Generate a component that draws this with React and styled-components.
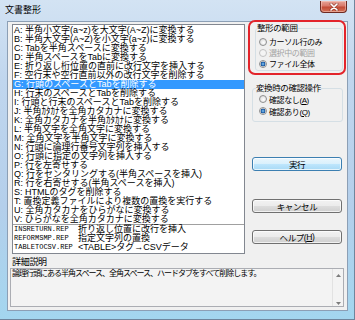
import React from 'react';
import styled, { createGlobalStyle } from 'styled-components';

const GlobalStyle = createGlobalStyle`
  html, body { margin: 0; padding: 0; }
  body {
    width: 355px;
    height: 320px;
    overflow: hidden;
    font-family: "Liberation Sans", "Noto Sans CJK JP", sans-serif;
    color: #000;
  }
`;

const Window = styled.div`
  width: 355px;
  height: 320px;
  box-sizing: border-box;
  display: flex;
  flex-direction: column;
  background: linear-gradient(180deg, #d3e3f3 0%, #c0d6ee 25%, #b4cfeb 65%, #a3d6ef 100%);
  border-right: 1px solid #6f859c;
  border-bottom: 1px solid #6f859c;
`;

const TitleBar = styled.div`
  height: 21px;
  flex: none;
  display: flex;
  align-items: flex-start;
  justify-content: space-between;
  padding: 0 7px 0 5px;
`;

const Title = styled.div`
  margin-top: 5px;
  font-size: 9px;
  line-height: 10px;
`;

const CloseButton = styled.div`
  width: 27px;
  height: 12px;
  margin-top: 1px;
  box-sizing: border-box;
  display: flex;
  align-items: center;
  justify-content: center;
  border: 1px solid #6e2a22;
  border-top: none;
  border-radius: 0 0 4px 4px;
  background: linear-gradient(180deg, #e6a398 0%, #d9796a 45%, #c24a36 55%, #d47358 100%);
  box-shadow: inset 0 0 0 1px rgba(255, 220, 210, 0.45);
`;

const Client = styled.div`
  flex: 1;
  margin: 0 6px 8px 7px;
  box-sizing: border-box;
  border: 1px solid #8c9fb5;
  background: #f0f0f0;
  display: flex;
  flex-direction: column;
`;

const TopRow = styled.div`
  display: flex;
  align-items: flex-start;
  margin-top: 2px;
  padding-left: 4px;
`;

const ListBox = styled.div`
  width: 233px;
  height: 230px;
  flex: none;
  box-sizing: border-box;
  border: 1px solid #828790;
  background: #fff;
  padding-top: 1px;
  overflow: hidden;
`;

const Row = styled.div`
  height: 9px;
  line-height: 9px;
  font-size: 9px;
  padding-left: 1px;
  white-space: nowrap;
  background: ${p => (p.$selected ? '#3399ff' : 'transparent')};
  color: ${p => (p.$selected ? '#fff' : '#000')};
`;

const RepRow = styled(Row)`
  display: flex;
  border-top: ${p => (p.$first ? '1px solid #a0a0a0' : 'none')};
`;

const RepName = styled.span`
  width: 64px;
  flex: none;
  font-family: "Liberation Mono", monospace;
  font-size: 7px;
`;

const RightColumn = styled.div`
  width: 98px;
  flex: none;
  margin: -4px 0 0 3px;
  display: flex;
  flex-direction: column;
`;

const Highlight = styled.div`
  border: 2px solid #e3242b;
  border-radius: 7px;
  padding: 2px 1px 2px 5px;
`;

const Group = styled.fieldset`
  margin: ${p => p.$margin || '0'};
  padding: ${p => p.$pad || '0 0 1px 1px'};
  border: 1px solid #d5dfe5;
  border-radius: 3px;
  min-width: 0;
`;

const Legend = styled.legend`
  padding: 0;
  margin-left: ${p => p.$offset || 0}px;
  font-size: 8.5px;
  line-height: 9px;
  letter-spacing: -0.4px;
`;

const RadioRow = styled.div`
  height: ${p => p.$height}px;
  display: flex;
  align-items: center;
  gap: 2px;
  margin-left: ${p => p.$indent}px;
  font-size: 8px;
  letter-spacing: -0.4px;
  color: ${p => (p.$disabled ? '#a3a3a3' : '#000')};
  white-space: nowrap;
`;

const RadioCircle = styled.span`
  width: 8px;
  height: 8px;
  flex: none;
  box-sizing: border-box;
  border-radius: 50%;
  border: 1px solid ${p => (p.$disabled ? '#c2c2c2' : '#8e8f8f')};
  background: ${p =>
    p.$checked
      ? 'radial-gradient(circle, #8fd0f7 0, #2a6cb5 1.6px, #1d4f8c 2.4px, #e4e4e4 2.6px, #fbfbfb 4px)'
      : p.$disabled
      ? '#f4f4f4'
      : 'radial-gradient(circle at 60% 60%, #ffffff 0, #e6e6e6 60%, #cfcfcf 100%)'};
`;

const Mnemonic = styled.span`
  text-decoration: underline;
`;

const Button = styled.div`
  width: 90px;
  height: 14px;
  margin: ${p => p.$top}px 0 0 4px;
  box-sizing: border-box;
  display: flex;
  align-items: center;
  justify-content: center;
  font-size: 8.5px;
  letter-spacing: -0.4px;
  border-radius: 3px;
  border: 1px solid ${p => (p.$default ? '#3c7fb1' : '#707070')};
  background: ${p =>
    p.$default
      ? 'linear-gradient(180deg, #eaf6fd 0%, #d9f0fc 50%, #bee6fd 51%, #a7d9f5 100%)'
      : 'linear-gradient(180deg, #f2f2f2 0%, #ebebeb 50%, #dddddd 51%, #cfcfcf 100%)'};
  box-shadow: inset 0 0 0 1px rgba(255, 255, 255, 0.7);
`;

const DetailLabel = styled.div`
  margin-top: 4px;
  padding-left: 4px;
  font-size: 9px;
  line-height: 9px;
  letter-spacing: -0.3px;
`;

const DetailBox = styled.div`
  height: 39px;
  margin: 1px 3px 0 2px;
  box-sizing: border-box;
  border: 1px solid #abadb3;
  background: #f3f3f3;
  display: flex;
`;

const DetailText = styled.div`
  flex: 1;
  padding-left: 1px;
  font-size: 8px;
  line-height: 9px;
  letter-spacing: -1px;
  white-space: nowrap;
`;

const ScrollBar = styled.div`
  width: 10px;
  flex: none;
  border-left: 1px solid #e2e2e2;
  display: flex;
  flex-direction: column;
  align-items: center;
  justify-content: space-between;
  padding: 5px 0 1px;
`;

const items = [
  'A: 半角小文字(a~z)を大文字(A~Z)に変換する',
  'B: 半角大文字(A~Z)を小文字(a~z)に変換する',
  'C: Tabを半角スペースに変換する',
  'D: 半角スペースをTabに変換する',
  'E: 折り返し桁位置の直前に改行文字を挿入する',
  'F: 空行末や空行直前以外の改行文字を削除する',
  'G: 行頭のスペースとTabを削除する',
  'H: 行末のスペースとTabを削除する',
  'I: 行頭と行末のスペースとTabを削除する',
  'J: 半角ｶﾀｶﾅを全角カタカナに変換する',
  'K: 全角カタカナを半角ｶﾀｶﾅに変換する',
  'L: 半角文字を全角文字に変換する',
  'M: 全角文字を半角文字に変換する',
  'N: 行頭に論理行番号文字列を挿入する',
  'O: 行頭に指定の文字列を挿入する',
  'P: 行を左寄せする',
  'Q: 行をセンタリングする(半角スペースを挿入)',
  'R: 行を右寄せする(半角スペースを挿入)',
  'S: HTMLのタグを削除する',
  'T: 置換定義ファイルにより複数の置換を実行する',
  'U: 全角カタカナをひらがなに変換する',
  'V: ひらがなを全角カタカナに変換する',
];

const reps = [
  ['INSRETURN.REP', '折り返し位置に改行を挿入'],
  ['REFORMSMP.REP', '指定文字列の置換'],
  ['TABLETOCSV.REP', '<TABLE>タグ→CSVデータ'],
];

function Radio({ label, checked, disabled, height, indent }) {
  return (
    <RadioRow $height={height} $indent={indent} $disabled={disabled}>
      <RadioCircle $checked={checked} $disabled={disabled} />
      <span>{label}</span>
    </RadioRow>
  );
}

function Arrow({ down }) {
  return (
    <svg width="5" height="3" viewBox="0 0 5 3">
      <path d={down ? 'M0 0 L5 0 L2.5 3 Z' : 'M0 3 L5 3 L2.5 0 Z'} fill="#7c7c7c" />
    </svg>
  );
}

export default function App() {
  return (
    <>
      <GlobalStyle />
      <Window>
        <TitleBar>
          <Title>文書整形</Title>
          <CloseButton>
            <svg width="10" height="8" viewBox="0 0 10 8">
              <path d="M2 1 L8 7 M8 1 L2 7" stroke="#6a2018" strokeWidth="3" strokeLinecap="round" opacity="0.55" />
              <path d="M2 1 L8 7 M8 1 L2 7" stroke="#fff" strokeWidth="1.6" strokeLinecap="round" />
            </svg>
          </CloseButton>
        </TitleBar>
        <Client>
          <TopRow>
            <ListBox>
              {items.map((t, i) => (
                <Row key={t} $selected={i === 6}>{t}</Row>
              ))}
              {reps.map(([name, desc], i) => (
                <RepRow key={name} $first={i === 0}>
                  <RepName>{name}</RepName>
                  <span>{desc}</span>
                </RepRow>
              ))}
            </ListBox>
            <RightColumn>
              <Highlight>
                <Group $pad="3px 0 1px 1px">
                  <Legend>整形の範囲</Legend>
                  <Radio label="カーソル行のみ" height={11} indent={2} />
                  <Radio label="選択中の範囲" height={11} indent={2} disabled />
                  <Radio label="ファイル全体" height={11} indent={2} checked />
                </Group>
              </Highlight>
              <Group $margin="9px 3px 0 4px" $pad="0 0 4px 1px">
                <Legend $offset={2}>変換時の確認操作</Legend>
                <Radio label={<>確認なし(<Mnemonic>A</Mnemonic>)</>} height={12} indent={5} />
                <Radio label={<>確認あり(<Mnemonic>Q</Mnemonic>)</>} height={12} indent={5} checked />
              </Group>
              <Button $top={35} $default>実行</Button>
              <Button $top={28}>キャンセル</Button>
              <Button $top={17}>ヘルプ(<Mnemonic>H</Mnemonic>)</Button>
            </RightColumn>
          </TopRow>
          <DetailLabel>詳細説明</DetailLabel>
          <DetailBox>
            <DetailText>論理行頭にある半角スペース、全角スペース、ハードタブをすべて削除します。</DetailText>
            <ScrollBar>
              <Arrow />
              <Arrow down />
            </ScrollBar>
          </DetailBox>
        </Client>
      </Window>
    </>
  );
}
